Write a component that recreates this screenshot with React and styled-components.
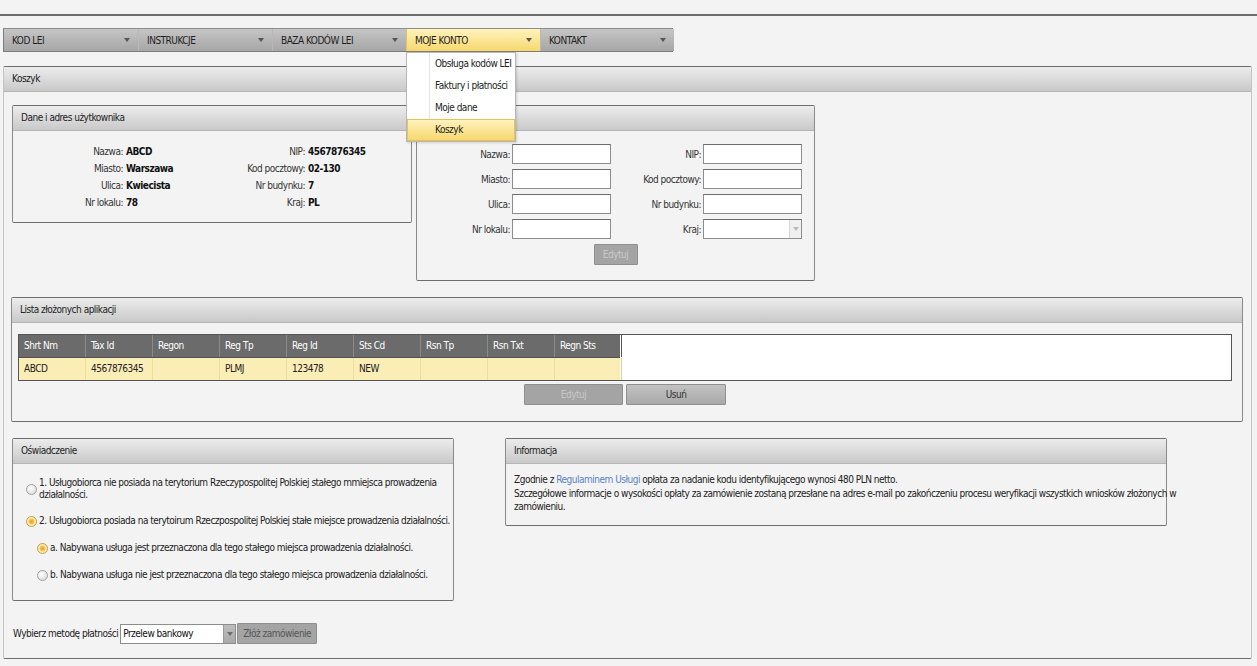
import React from 'react';
import styled, { createGlobalStyle, css } from 'styled-components';

const font = `"DejaVu Sans Condensed", "Liberation Sans", sans-serif`;
const tracking = '-0.5px';

const colors = {
  page: '#f3f3f3',
  rule: '#6d6d6d',
  text: '#222',
  border: '#8a8a8a',
  yellowTop: '#fff3bd',
  yellowBottom: '#f7d86e',
  rowYellow: '#fbedb6',
};

const GlobalStyle = createGlobalStyle`
  html, body {
    margin: 0;
    background: ${colors.page};
    font-family: ${font};
    font-size: 10px;
    letter-spacing: ${tracking};
    color: ${colors.text};
  }
  * { box-sizing: border-box; }
`;

const TopRule = styled.div`
  height: 2px;
  margin-top: 14px;
  background: ${colors.rule};
`;

const MenuBar = styled.nav`
  position: relative;
  display: flex;
  margin: 12px 0 0 3px;
  width: 670px;
  height: 24px;
  border: 1px solid #7c7c7c;
  border-top-color: #8e8e8e;
  z-index: 5;
`;

const MenuItem = styled.div`
  position: relative;
  flex: 0 0 134px;
  display: flex;
  align-items: center;
  justify-content: space-between;
  padding: 0 8px;
  text-transform: uppercase;
  color: #1e1e1e;
  background: linear-gradient(#c5c5c5, #a6a6a6);
  border-left: 1px solid #b9b9b9;
  &:first-child { border-left: none; }

  ${({ $active }) => $active && css`
    background: linear-gradient(${colors.yellowTop}, ${colors.yellowBottom});
    border-left-color: #e2c25a;
  `}
`;

const Caret = styled.span`
  width: 0;
  height: 0;
  border-left: 3px solid transparent;
  border-right: 3px solid transparent;
  border-top: 4px solid #555;
`;

const Dropdown = styled.ul`
  position: absolute;
  top: 23px;
  left: -1px;
  width: 110px;
  margin: 0;
  padding: 0;
  list-style: none;
  background: #fff;
  border: 1px solid #b8b8b8;
  box-shadow: 1px 1px 2px rgba(0, 0, 0, 0.15);
  text-transform: none;
  &::before {
    content: '';
    position: absolute;
    left: 22px;
    top: 0;
    height: 66px;
    border-left: 1px solid #e4e4e4;
  }
`;

const DropdownItem = styled.li`
  height: 22px;
  line-height: 22px;
  padding-left: 28px;
  white-space: nowrap;
  color: #222;
  ${({ $active }) => $active && css`
    background: linear-gradient(${colors.yellowTop}, ${colors.yellowBottom});
    border: 1px solid #e6c25a;
    line-height: 20px;
    padding-left: 27px;
  `}
`;

const Panel = styled.section`
  border: 1px solid ${colors.border};
  border-top-color: #6d6d6d;
  border-bottom-color: #6d6d6d;
  border-radius: 2px;
  background: ${colors.page};
  width: ${({ $w }) => ($w ? `${$w}px` : 'auto')};
  height: ${({ $h }) => ($h ? `${$h}px` : 'auto')};
`;

const MainPanel = styled(Panel)`
  margin: 14px 5px 0 3px;
  border-left-color: #c4c4c4;
  border-right-color: #c4c4c4;
`;

const ListPanel = styled(Panel)`
  margin: 16px 0 0 -1px;
`;

const PanelHeader = styled.header`
  height: 25px;
  line-height: 24px;
  padding: 0 8px;
  white-space: nowrap;
  background: linear-gradient(#ececec, #c9c9c9);
  border-bottom: 1px solid #b5b5b5;
`;

const MainBody = styled.div`
  padding: 13px 8px 14px 8px;
`;

const Row = styled.div`
  display: flex;
  align-items: flex-start;
  gap: ${({ $gap }) => $gap}px;
  margin-top: ${({ $mt }) => $mt || 0}px;
`;

const InfoGrid = styled.div`
  display: grid;
  grid-template-columns: 110px 77px 105px 1fr;
  grid-auto-rows: 17px;
  align-items: center;
  padding-top: 12px;
`;

const InfoLabel = styled.span`
  text-align: right;
  color: #333;
`;

const InfoValue = styled.b`
  padding-left: 3px;
  font-weight: bold;
  color: #111;
`;

const FormGrid = styled.div`
  display: grid;
  grid-template-columns: 95px 99px 92px 99px;
  grid-auto-rows: 20px;
  row-gap: 5px;
  align-items: center;
  padding-top: 13px;
`;

const FormLabel = styled.label`
  text-align: right;
  padding-right: 2px;
  color: #333;
`;

const TextInput = styled.div`
  position: relative;
  width: 99px;
  height: 20px;
  background: #fff;
  border: 1px solid #8d8d8d;
  border-top-color: #6d6d6d;
`;

const SelectArrow = styled.span`
  position: absolute;
  right: 0;
  top: 0;
  bottom: 0;
  width: 12px;
  background: ${({ $dark }) => ($dark ? 'linear-gradient(#bdbdbd, #a8a8a8)' : '#f0f0f0')};
  border-left: 1px solid ${({ $dark }) => ($dark ? '#9a9a9a' : '#d5d5d5')};
  display: flex;
  align-items: center;
  justify-content: center;
  &::after {
    content: '';
    border-left: 3px solid transparent;
    border-right: 3px solid transparent;
    border-top: 4px solid ${({ $dark }) => ($dark ? '#6c6c6c' : '#bbb')};
  }
`;

const ButtonRow = styled.div`
  display: flex;
  justify-content: center;
  gap: 3px;
  margin-top: ${({ $mt }) => $mt}px;
`;

const Button = styled.button`
  font-family: ${font};
  font-size: 10px;
  letter-spacing: ${tracking};
  white-space: nowrap;
  height: 21px;
  width: ${({ $w }) => $w}px;
  margin-left: ${({ $ml }) => $ml || 0}px;
  padding: 0;
  border: 1px solid #8f8f8f;
  border-radius: 1px;
  background: ${({ disabled }) => (disabled ? '#a4a4a4' : 'linear-gradient(#c2c2c2, #a9a9a9)')};
  color: ${({ disabled, $dim }) => ($dim ? '#555' : disabled ? '#c9c9c9' : '#333')};
`;

const ListBody = styled.div`
  padding: 0 10px 16px 6px;
`;

const Table = styled.div`
  margin-top: 11px;
  background: #fff;
  border: 1px solid #555;
  height: 47px;
`;

const TableRow = styled.div`
  display: flex;
  height: ${({ $head }) => ($head ? 23 : 22)}px;
  width: 601px;
  background: ${({ $head }) => ($head ? '#6b6b6b' : colors.rowYellow)};
  color: ${({ $head }) => ($head ? '#fff' : '#222')};
  border-bottom: ${({ $head }) => ($head ? '1px solid #505050' : 'none')};
`;

const Cell = styled.div`
  flex: 0 0 67px;
  padding-left: 5px;
  line-height: 22px;
  white-space: nowrap;
  overflow: hidden;
  border-right: 1px solid ${({ $head }) => ($head ? '#8a8a8a' : '#efdc9c')};
  &:last-child { border-right: 1px solid ${({ $head }) => ($head ? '#555' : '#e0cf95')}; }
`;

const RadioList = styled.div`
  padding: 13px 8px 0 13px;
  display: flex;
  flex-direction: column;
  gap: 13px;
`;

const RadioRow = styled.div`
  display: flex;
  align-items: center;
  gap: 2px;
  line-height: 12px;
  white-space: nowrap;
  margin-left: ${({ $indent }) => ($indent ? 11 : 0)}px;
  min-height: 14px;
`;

const Radio = styled.span`
  flex: 0 0 11px;
  width: 11px;
  height: 11px;
  border-radius: 50%;
  border: 1px solid #a0a0a0;
  background: radial-gradient(circle at 40% 35%, #ffffff, #d4d4d4);
  ${({ $checked }) => $checked && css`
    border-color: #c99a3a;
    background: radial-gradient(circle at 50% 50%, #f3a21c 0, #f8c24a 2.5px, #fff3cf 3.5px, #e8d9b0 100%);
  `}
`;

const InfoText = styled.p`
  margin: 0;
  padding: 9px 8px 0 8px;
  line-height: 13.5px;
  white-space: nowrap;
`;

const Link = styled.a`
  color: #5b82c4;
  text-decoration: none;
`;

const PaymentRow = styled.div`
  display: flex;
  align-items: center;
  margin-top: 22px;
  padding-left: 1px;
  white-space: nowrap;
`;

const PaymentLabel = styled.span`
  flex: none;
  margin-right: 2px;
`;

const PaymentSelect = styled.div`
  position: relative;
  width: 116px;
  height: 20px;
  line-height: 18px;
  padding-left: 2px;
  background: #fff;
  border: 1px solid #8d8d8d;
  color: #111;
`;

const labels = ['Shrt Nm', 'Tax Id', 'Regon', 'Reg Tp', 'Reg Id', 'Sts Cd', 'Rsn Tp', 'Rsn Txt', 'Regn Sts'];
const rowData = ['ABCD', '4567876345', '', 'PLMJ', '123478', 'NEW', '', '', ''];

const menu = ['Kod LEI', 'Instrukcje', 'Baza kodów LEI', 'Moje konto', 'Kontakt'];

const App = () => (
  <>
    <GlobalStyle />
    <TopRule />
    <MenuBar>
      {menu.map((m) => (
        <MenuItem key={m} $active={m === 'Moje konto'}>
          {m}
          <Caret />
          {m === 'Moje konto' && (
            <Dropdown>
              <DropdownItem>Obsługa kodów LEI</DropdownItem>
              <DropdownItem>Faktury i płatności</DropdownItem>
              <DropdownItem>Moje dane</DropdownItem>
              <DropdownItem $active>Koszyk</DropdownItem>
            </Dropdown>
          )}
        </MenuItem>
      ))}
    </MenuBar>

    <MainPanel>
      <PanelHeader>Koszyk</PanelHeader>
      <MainBody>
        <Row $gap={4}>
          <Panel $w={400} $h={118}>
            <PanelHeader>Dane i adres użytkownika</PanelHeader>
            <InfoGrid>
              <InfoLabel>Nazwa:</InfoLabel><InfoValue>ABCD</InfoValue>
              <InfoLabel>NIP:</InfoLabel><InfoValue>4567876345</InfoValue>
              <InfoLabel>Miasto:</InfoLabel><InfoValue>Warszawa</InfoValue>
              <InfoLabel>Kod pocztowy:</InfoLabel><InfoValue>02-130</InfoValue>
              <InfoLabel>Ulica:</InfoLabel><InfoValue>Kwiecista</InfoValue>
              <InfoLabel>Nr budynku:</InfoLabel><InfoValue>7</InfoValue>
              <InfoLabel>Nr lokalu:</InfoLabel><InfoValue>78</InfoValue>
              <InfoLabel>Kraj:</InfoLabel><InfoValue>PL</InfoValue>
            </InfoGrid>
          </Panel>
          <Panel $w={399} $h={176}>
            <PanelHeader>Dane płatnika faktury</PanelHeader>
            <FormGrid>
              <FormLabel>Nazwa:</FormLabel><TextInput />
              <FormLabel>NIP:</FormLabel><TextInput />
              <FormLabel>Miasto:</FormLabel><TextInput />
              <FormLabel>Kod pocztowy:</FormLabel><TextInput />
              <FormLabel>Ulica:</FormLabel><TextInput />
              <FormLabel>Nr budynku:</FormLabel><TextInput />
              <FormLabel>Nr lokalu:</FormLabel><TextInput />
              <FormLabel>Kraj:</FormLabel><TextInput><SelectArrow /></TextInput>
            </FormGrid>
            <ButtonRow $mt={5}>
              <Button $w={44} disabled>Edytuj</Button>
            </ButtonRow>
          </Panel>
        </Row>

        <ListPanel>
          <PanelHeader>Lista złożonych aplikacji</PanelHeader>
          <ListBody>
            <Table>
              <TableRow $head>
                {labels.map((l) => <Cell key={l} $head>{l}</Cell>)}
              </TableRow>
              <TableRow>
                {rowData.map((d, i) => <Cell key={i}>{d}</Cell>)}
              </TableRow>
            </Table>
            <ButtonRow $mt={3}>
              <Button $w={99} disabled>Edytuj</Button>
              <Button $w={100}>Usuń</Button>
            </ButtonRow>
          </ListBody>
        </ListPanel>

        <Row $gap={51} $mt={16}>
          <Panel $w={442} $h={163}>
            <PanelHeader>Oświadczenie</PanelHeader>
            <RadioList>
              <RadioRow>
                <Radio />
                <span>1. Usługobiorca nie posiada na terytorium Rzeczypospolitej Polskiej stałego mmiejsca prowadzenia<br />działalności.</span>
              </RadioRow>
              <RadioRow>
                <Radio $checked />
                <span>2. Usługobiorca posiada na terytoirum Rzeczpospolitej Polskiej stałe miejsce prowadzenia działalności.</span>
              </RadioRow>
              <RadioRow $indent>
                <Radio $checked />
                <span>a. Nabywana usługa jest przeznaczona dla tego stałego miejsca prowadzenia działalności.</span>
              </RadioRow>
              <RadioRow $indent>
                <Radio />
                <span>b. Nabywana usługa nie jest przeznaczona dla tego stałego miejsca prowadzenia działalności.</span>
              </RadioRow>
            </RadioList>
          </Panel>
          <Panel $w={662} $h={88}>
            <PanelHeader>Informacja</PanelHeader>
            <InfoText>
              Zgodnie z <Link href="#">Regulaminem Usługi</Link> opłata za nadanie kodu identyfikującego wynosi 480 PLN netto.<br />
              Szczegółowe informacje o wysokości opłaty za zamówienie zostaną przesłane na adres e-mail po zakończeniu procesu weryfikacji wszystkich wniosków złożonych w<br />
              zamówieniu.
            </InfoText>
          </Panel>
        </Row>

        <PaymentRow>
          <PaymentLabel>Wybierz metodę płatności</PaymentLabel>
          <PaymentSelect>
            Przelew bankowy
            <SelectArrow $dark />
          </PaymentSelect>
          <Button $w={80} $ml={1} $dim disabled>Złóż zamówienie</Button>
        </PaymentRow>
      </MainBody>
    </MainPanel>
  </>
);

export default App;
